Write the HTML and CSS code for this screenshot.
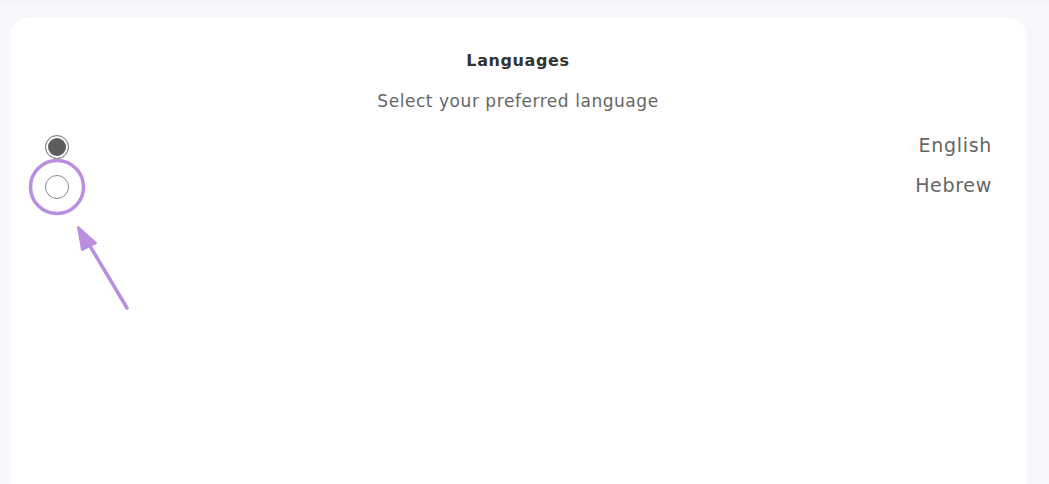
FILE: index.html
```html
<!DOCTYPE html>
<html lang="en">
<head>
    <meta charset="UTF-8">
    <meta name="viewport" content="width=device-width, initial-scale=1.0">
    <title>Languages</title>
    <link rel="stylesheet" href="styles.css">
</head>
<body>
    <div class="topbar"></div>
    <div class="card">
        <h1>Languages</h1>
        <p class="subtitle">Select your preferred language</p>
        <div class="options">
            <label class="option">
                <input type="radio" name="lang" value="en" checked>
                <span class="radio"></span>
                <span class="name">English</span>
            </label>
            <label class="option">
                <input type="radio" name="lang" value="he">
                <span class="radio"></span>
                <span class="name">Hebrew</span>
            </label>
        </div>

        <!-- annotation over the hebrew radio -->
        <svg class="callout" width="140" height="200" viewBox="0 0 140 200">
            <circle cx="47" cy="48" r="26.5" fill="none" stroke="#bb8fe0" stroke-width="3.5"/>
            <line x1="117" y1="169" x2="77" y2="102" stroke="#bb8fe0" stroke-width="3.5" stroke-linecap="round"/>
            <polygon points="68,88 86,104 72,111" fill="#bb8fe0" stroke="#bb8fe0" stroke-width="2" stroke-linejoin="round"/>
        </svg>
    </div>
</body>
</html>
```

FILE: styles.css
```css
body {
    font-family: "DejaVu Sans", sans-serif;
    margin: 0;
    padding: 0;
    background-color: #f7f7fb;
    color: #333;
    height: 484px;
    overflow: hidden;
}
.topbar {
    height: 4px;
    background-color: #f2f2f7;
}
.card {
    position: relative;
    margin: 14px 23px 0 10px;
    padding: 31px 35px 0;
    height: 480px;
    box-sizing: border-box;
    background-color: #fff;
    border-radius: 16px;
}
h1 {
    margin: 0;
    text-align: center;
    font-size: 16px;
    font-weight: 600;
    letter-spacing: 0.6px;
    color: #333;
    line-height: 24px;
}
.subtitle {
    margin: 16px 0 0;
    text-align: center;
    font-size: 17px;
    letter-spacing: 0.55px;
    color: #666;
    line-height: 24px;
}
.options {
    margin-top: 14px;
    display: flex;
    flex-direction: column;
}
.option {
    display: flex;
    align-items: center;
    justify-content: space-between;
    height: 40px;
}
.option input {
    display: none;
}
.radio {
    width: 24px;
    height: 24px;
    border: 1px solid #888;
    border-radius: 50%;
    box-sizing: border-box;
    background-color: #fff;
    margin-left: 0;
}
.option input:checked + .radio {
    background-color: #5c5c5c;
    box-shadow: inset 0 0 0 2px #fff;
}
.name {
    font-size: 19px;
    letter-spacing: 0.7px;
    color: #666;
    margin-bottom: 5px;
    margin-right: -1px;
}
.callout {
    position: absolute;
    left: 0;
    top: 121px;
}
```
